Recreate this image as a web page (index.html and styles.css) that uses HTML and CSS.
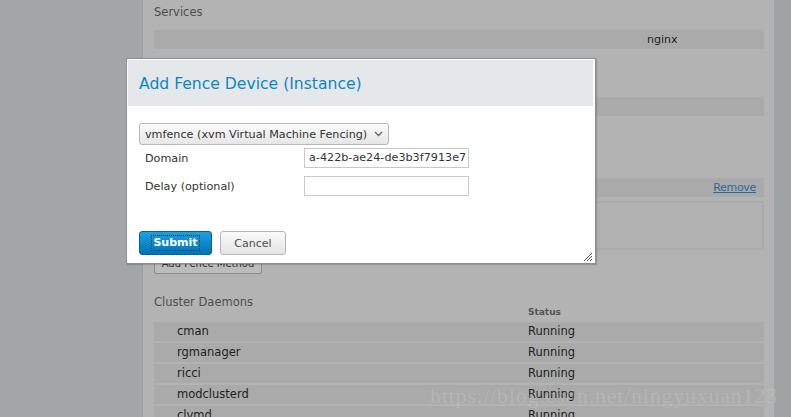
FILE: index.html
```html
<!DOCTYPE html>
<html>
<head>
<meta charset="utf-8">
<link rel="stylesheet" href="styles.css">
</head>
<body>
<div class="layout">
  <div class="sidebar"></div>
  <div class="main">
    <div class="sec-title services">Services</div>
    <div class="bar svc-row"><span></span><span class="svc-name">nginx</span></div>
    <div class="bar bar-2"></div>
    <div class="bar bar-3"><a class="remove">Remove</a></div>
    <div class="method-box"></div>
    <div class="add-method">Add Fence Method</div>
    <div class="sec-title daemons">Cluster Daemons</div>
    <div class="thead"><span></span><span class="th">Status</span></div>
    <div class="trow"><span>cman</span><span>Running</span></div>
    <div class="trow"><span>rgmanager</span><span>Running</span></div>
    <div class="trow"><span>ricci</span><span>Running</span></div>
    <div class="trow"><span>modclusterd</span><span>Running</span></div>
    <div class="trow"><span>clvmd</span><span>Running</span></div>
  </div>
  <div class="rightbar"></div>
</div>

<div class="watermark">https://blog.csdn.net/ningyuxuan123</div>

<div class="dialog">
  <div class="dlg-head">Add Fence Device (Instance)</div>
  <div class="dlg-body">
    <div class="select">
      <span>vmfence (xvm Virtual Machine Fencing)</span>
      <svg class="chev" width="9" height="6" viewBox="0 0 9 6"><path d="M1 1 L4.5 4.5 L8 1" fill="none" stroke="#666" stroke-width="1.3"/></svg>
    </div>
    <div class="field">
      <span class="lbl">Domain</span>
      <div class="input">a-422b-ae24-de3b3f7913e7</div>
    </div>
    <div class="field">
      <span class="lbl">Delay (optional)</span>
      <div class="input"></div>
    </div>
    <div class="buttons">
      <div class="btn submit"><span class="focus">Submit</span></div>
      <div class="btn cancel">Cancel</div>
    </div>
  </div>
  <svg class="grip" width="11" height="11" viewBox="0 0 11 11"><path d="M10 2 L2 10 M10 5 L5 10 M10 8 L8 10" stroke="#555" stroke-width="1"/></svg>
</div>
</body>
</html>
```

FILE: styles.css
```css
html, body {
  margin: 0;
  padding: 0;
}
body {
  width: 791px;
  height: 417px;
  overflow: hidden;
  background: #a2a5a6;
  font-family: "DejaVu Sans", sans-serif;
  font-size: 11px;
  color: #222;
  position: relative;
}
.layout {
  display: flex;
  height: 417px;
}
.sidebar {
  width: 142px;
  background: #a3a6a7;
  border-right: 1px solid #9c9fa0;
}
.main {
  width: 610px;
  padding: 0 10px 0 11px;
  background: #b3b3b3;
}
.rightbar {
  flex: 1;
  background: #a1a4a5;
}
.sec-title {
  color: #4e4e4e;
  font-size: 11.5px;
  line-height: 16px;
}
.services {
  padding-top: 4px;
  height: 26px;
}
.bar {
  height: 19px;
  background: #aaaaaa;
}
.svc-row {
  display: grid;
  grid-template-columns: 493px 1fr;
  line-height: 20px;
  color: #222;
}
.bar-2 {
  margin-top: 48px;
}
.bar-3 {
  margin-top: 62px;
  display: flex;
  justify-content: flex-end;
  align-items: center;
  padding-right: 8px;
}
.remove {
  color: #2a68a0;
  text-decoration: underline;
  font-size: 11px;
  letter-spacing: -0.3px;
}
.method-box {
  margin-top: 4px;
  height: 45px;
  border: 2px solid #ababab;
  background: #b1b1b1;
}
.add-method {
  margin-top: 3px;
  width: 106px;
  height: 19px;
  border: 1px solid #8c8c8c;
  border-radius: 2px;
  background: #bcbcbc;
  color: #333;
  font-size: 10px;
  line-height: 19px;
  text-align: center;
}
.daemons {
  margin-top: 20px;
  height: 16px;
}
.thead {
  display: grid;
  grid-template-columns: 374px 1fr;
  height: 14px;
  margin-top: -4px;
  line-height: 12px;
}
.th {
  font-weight: bold;
  font-size: 9px;
  color: #555;
}
.trow {
  display: grid;
  grid-template-columns: 351px 1fr;
  height: 19px;
  line-height: 19px;
  margin-top: 2px;
  padding-left: 23px;
  background: #aaaaaa;
  color: #1e1e1e;
  font-size: 11.5px;
}
.watermark {
  position: absolute;
  left: 430px;
  top: 383px;
  font-family: "Liberation Serif", "DejaVu Serif", serif;
  font-size: 22px;
  letter-spacing: 0.75px;
  color: rgba(225, 225, 215, 0.22);
  white-space: nowrap;
}
.dialog {
  position: absolute;
  left: 126px;
  top: 58px;
  width: 465px;
  height: 203px;
  background: #fff;
  border: 1px solid #8e8e8e;
  padding: 1px 2px 0 1px;
  box-shadow: 1px 1px 1px rgba(0,0,0,0.15);
}
.dlg-head {
  height: 46px;
  background: #e5e8eb;
  color: #0a86c8;
  font-size: 15.6px;
  line-height: 48px;
  padding-left: 11px;
}
.dlg-body {
  padding: 17px 0 0 11px;
}
.select {
  width: 250px;
  height: 22px;
  border: 1px solid #b8b8b8;
  border-radius: 3px;
  background: linear-gradient(#fafafa, #e6e6e6);
  display: flex;
  align-items: center;
  justify-content: space-between;
  padding: 0 5px 0 5px;
  box-sizing: border-box;
  color: #333;
  font-size: 11.2px;
}
.field {
  display: grid;
  grid-template-columns: 165px 165px;
  align-items: center;
  margin-top: 3px;
  color: #333;
  font-size: 11.2px;
}
.field + .field {
  margin-top: 8px;
}
.lbl {
  padding-left: 6px;
}
.input {
  height: 18px;
  border: 1px solid #c8c8c8;
  line-height: 18px;
  padding-left: 4px;
  overflow: hidden;
  white-space: nowrap;
  color: #333;
  font-size: 11.2px;
}
.buttons {
  display: flex;
  gap: 8px;
  margin-top: 35px;
}
.btn {
  border-radius: 3px;
  box-sizing: border-box;
  display: flex;
  align-items: center;
  justify-content: center;
}
.submit {
  width: 73px;
  height: 24px;
  background: linear-gradient(#1f9fe0, #0073b5);
  border: 1px solid #00659c;
  color: #fff;
  font-weight: bold;
  font-size: 11px;
}
.focus {
  outline: 1px dotted #222;
  padding: 0 1px;
  line-height: 14px;
}
.cancel {
  width: 66px;
  height: 24px;
  background: linear-gradient(#fafafa, #e4e4e4);
  border: 1px solid #b5b5b5;
  color: #4d4d4d;
  font-size: 11px;
}
.grip {
  position: absolute;
  right: 2px;
  bottom: 1px;
}
```
